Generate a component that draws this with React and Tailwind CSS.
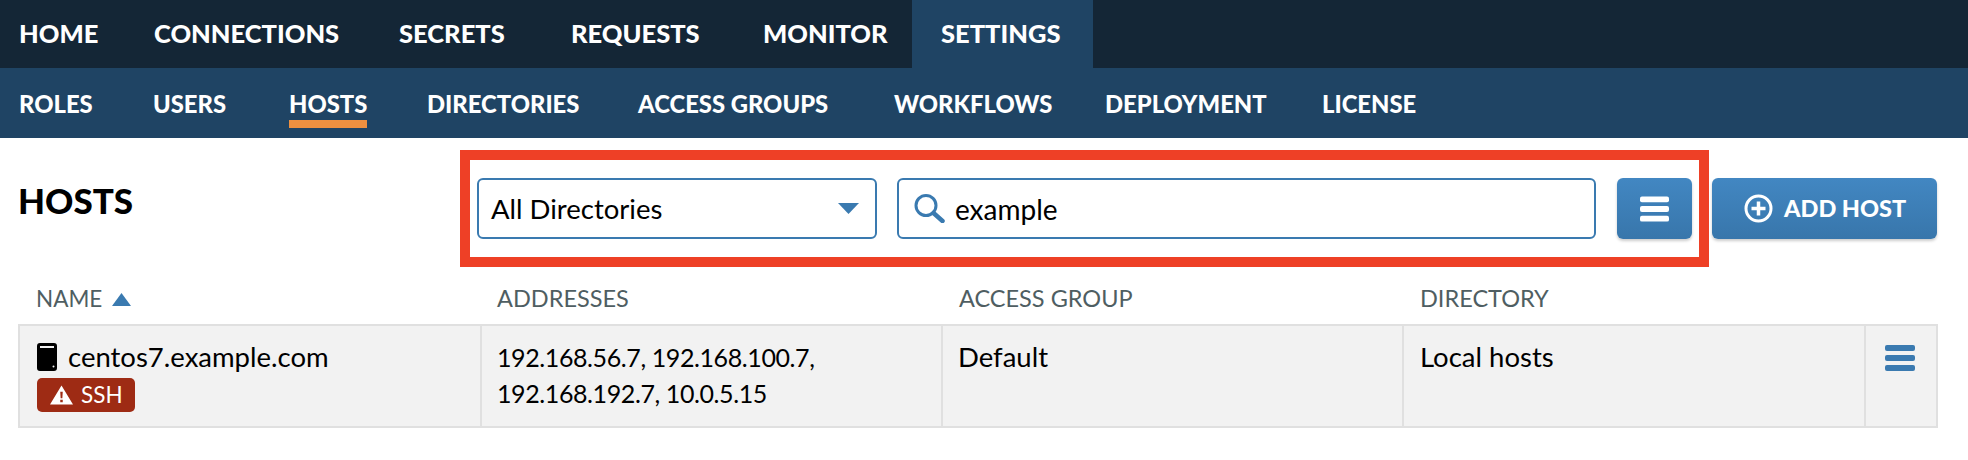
const font = "font-['Lato','Liberation_Sans',sans-serif]";

const mainTabs = [
  { label: 'HOME', width: 'w-[135px]' },
  { label: 'CONNECTIONS', width: 'w-[245px]' },
  { label: 'SECRETS', width: 'w-[172px]' },
  { label: 'REQUESTS', width: 'w-[192px]' },
  { label: 'MONITOR', width: 'w-[168px]' },
  { label: 'SETTINGS', width: 'w-[181px]', active: true },
];

const subTabs = [
  { label: 'ROLES', width: 'w-[134px]' },
  { label: 'USERS', width: 'w-[136px]' },
  { label: 'HOSTS', width: 'w-[138px]', active: true },
  { label: 'DIRECTORIES', width: 'w-[211px]' },
  { label: 'ACCESS GROUPS', width: 'w-[256px]' },
  { label: 'WORKFLOWS', width: 'w-[211px]' },
  { label: 'DEPLOYMENT', width: 'w-[217px]' },
  { label: 'LICENSE', width: 'w-[120px]' },
];

function MenuBars({ className }) {
  return (
    <svg viewBox="0 0 30 26" className={className} fill="currentColor">
      <rect x="0" y="0" width="30" height="6" rx="2" />
      <rect x="0" y="10" width="30" height="6" rx="2" />
      <rect x="0" y="20" width="30" height="6" rx="2" />
    </svg>
  );
}

export default function App() {
  return (
    <div className={`${font} w-[1968px] h-[460px] bg-white overflow-hidden`}>
      <nav className="flex h-[68px] bg-[#142636] text-white text-[25.5px] font-black">
        {mainTabs.map((tab) => (
          <div
            key={tab.label}
            className={`${tab.width} flex items-center pb-[2px] ${tab.active ? 'bg-[#1f4464] pl-[29px]' : 'pl-[19px]'}`}
          >
            {tab.label}
          </div>
        ))}
      </nav>

      <nav className="flex h-[70px] bg-[#1f4464] text-white text-[23.8px] font-black">
        {subTabs.map((tab) => (
          <div key={tab.label} className={`${tab.width} pl-[19px] pt-[16px]`}>
            <span className={`inline-block leading-[40px] h-[44px] ${tab.active ? 'border-b-[8px] border-[#ee9040]' : ''}`}>
              {tab.label}
            </span>
          </div>
        ))}
      </nav>

      <div className="flex items-start pl-[18px] pr-[31px] pt-[12px]">
        <h1 className="text-[35px] leading-[36px] font-black text-black mt-[32px]">HOSTS</h1>
        <div className="ml-auto flex items-center gap-[3px]">
          <div className="flex items-center w-[1249px] h-[117px] border-[10px] border-[#ee4026] px-[7px]">
            <div className="flex items-center justify-between w-[400px] h-[61px] border-2 border-[#3a7ab0] rounded-[6px] pl-[12px] pr-[16px] text-[27.5px] text-black">
              All Directories
              <svg viewBox="0 0 21 11" className="w-[21px] h-[11px] text-[#3a7ab0]" fill="currentColor">
                <path d="M0 0h21L10.5 11z" />
              </svg>
            </div>
            <div className="flex items-center w-[699px] h-[61px] ml-[20px] border-2 border-[#3a7ab0] rounded-[6px] pl-[15px] text-[28px] text-black">
              <svg viewBox="0 0 31 29" className="w-[31px] h-[29px] mr-[10px] text-[#3a7ab0]" fill="none" stroke="currentColor">
                <circle cx="12" cy="11.5" r="10" strokeWidth="3" />
                <path d="M19.5 19l9 8" strokeWidth="4.5" strokeLinecap="round" />
              </svg>
              example
            </div>
            <button className="flex items-center justify-center w-[75px] h-[61px] ml-[21px] rounded-[6px] bg-gradient-to-b from-[#4287c2] to-[#3876ab] shadow-[0_2px_3px_rgba(0,0,0,0.2)] text-white">
              <MenuBars className="w-[29px] h-[26px]" />
            </button>
          </div>
          <button className="flex items-center w-[225px] h-[61px] pl-[32px] rounded-[6px] bg-gradient-to-b from-[#4287c2] to-[#3876ab] shadow-[0_2px_3px_rgba(0,0,0,0.2)] text-white text-[23.5px] font-black">
            <svg viewBox="0 0 29 29" className="w-[29px] h-[29px] mr-[11px]" fill="none" stroke="currentColor">
              <circle cx="14.5" cy="14.5" r="12.5" strokeWidth="3" />
              <path d="M14.5 7.5v14M7.5 14.5h14" strokeWidth="3.5" />
            </svg>
            ADD HOST
          </button>
        </div>
      </div>

      <div className="ml-[18px] w-[1920px]">
        <div className="grid grid-cols-[464px_460px_461px_462px_73px] h-[57px] items-center text-[23.5px] text-[#4f5e62]">
          <div className="pl-[18px] flex items-center pt-[7px]">
            <span className="text-[22.5px]">NAME</span>
            <svg viewBox="0 0 19 13" className="w-[19px] h-[13px] ml-[10px] text-[#3a7ab0]" fill="currentColor">
              <path d="M9.5 0L19 13H0z" />
            </svg>
          </div>
          <div className="pl-[15px] pt-[7px]">ADDRESSES</div>
          <div className="pl-[17px] pt-[7px]">ACCESS GROUP</div>
          <div className="pl-[17px] pt-[7px]">DIRECTORY</div>
        </div>

        <div className="grid grid-cols-[462px_461px_461px_462px_70px] h-[104px] border-2 border-[#e0e0e0] bg-[#f2f2f2] text-[27.5px] leading-[36px] text-black">
          <div className="border-r-2 border-[#e0e0e0] pl-[17px] pt-[13px]">
            <div className="flex items-center h-[36px]">
              <svg viewBox="0 0 20 28" className="w-[20px] h-[28px] mr-[11px]" fill="black">
                <path fillRule="evenodd" d="M3 0h14a3 3 0 0 1 3 3v22a3 3 0 0 1-3 3H3a3 3 0 0 1-3-3V3a3 3 0 0 1 3-3zM3 3v2h14V3zM15.5 23.5a1 1 0 1 0 2 0a1 1 0 1 0-2 0z" />
              </svg>
              centos7.example.com
            </div>
            <div className="flex items-center w-[98px] h-[34px] mt-[3px] rounded-[5px] bg-[#9e2b14] text-white text-[22.5px] pl-[13px]">
              <svg viewBox="0 0 24 20" className="w-[23px] h-[20px] mr-[8px]" fill="white">
                <path fillRule="evenodd" d="M12 0l12 20H0zM10.7 6.5l.4 7h1.8l.4-7zM10.7 15v2.6h2.6V15z" />
              </svg>
              SSH
            </div>
          </div>
          <div className="border-r-2 border-[#e0e0e0] pl-[15px] pt-[13px] text-[25px] tracking-[-0.4px]">
            192.168.56.7, 192.168.100.7,
            <br />
            192.168.192.7, 10.0.5.15
          </div>
          <div className="border-r-2 border-[#e0e0e0] pl-[15px] pt-[13px]">Default</div>
          <div className="border-r-2 border-[#e0e0e0] pl-[16px] pt-[13px]">Local hosts</div>
          <div className="pl-[19px] pt-[19px] text-[#3a7ab0]">
            <MenuBars className="w-[30px] h-[26px]" />
          </div>
        </div>
      </div>
    </div>
  );
}
